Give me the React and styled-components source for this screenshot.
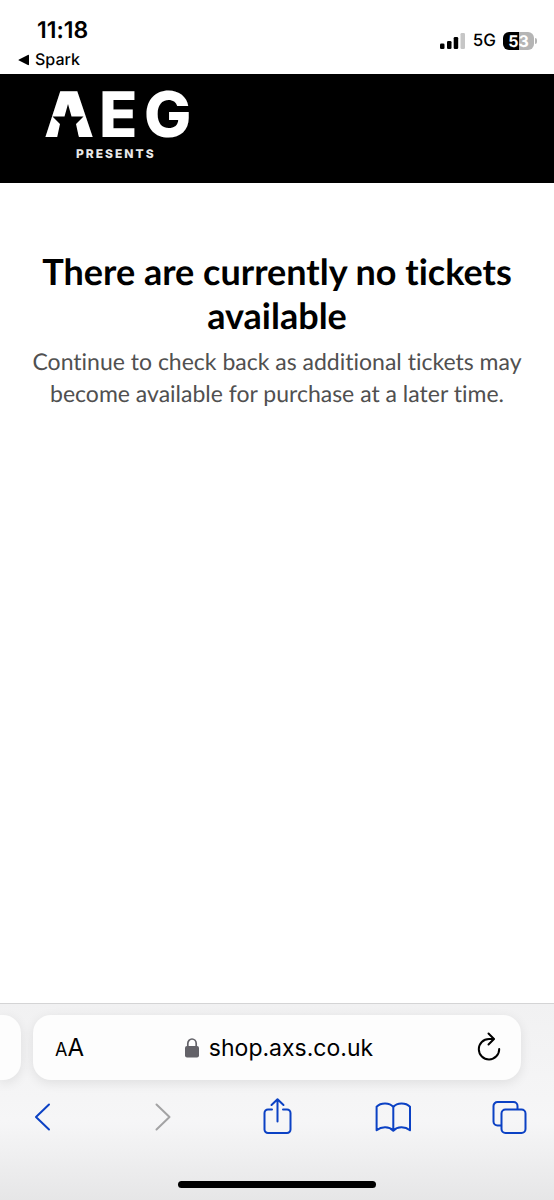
import styled, { createGlobalStyle } from 'styled-components'

const App = () => {
  return (
    <Page>
      <GlobalStyle />
      <StatusBar>
        <StatusLeft>
          <Clock>11:18</Clock>
          <BackToApp href="#spark">
            <svg width="12" height="12" viewBox="0 0 12 12" aria-hidden="true">
              <path d="M11 1.6v8.8c0 .7-.6.9-1.1.6L1 6.6c-.6-.3-.6-.9 0-1.2L9.900 1c.5-.3 1.100-.1 1.100.6z" />
            </svg>
            Spark
          </BackToApp>
        </StatusLeft>
        <StatusRight>
          <SignalIcon />
          <Network>5G</Network>
          <Battery>
            <BatteryBody>53</BatteryBody>
            <BatteryTip />
          </Battery>
        </StatusRight>
      </StatusBar>

      <Header>
        <AegLogo />
      </Header>

      <Main>
        <Title>There are currently no tickets available</Title>
        <Message>
          Continue to check back as additional tickets may become available for purchase at a later
          time.
        </Message>
      </Main>

      <BrowserBar>
        <TabRow>
          <PreviousTab />
          <AddressBar>
            <TextSizeButton aria-label="Page settings">
              <small>A</small>A
            </TextSizeButton>
            <AddressButton>
              <LockIcon />
              shop.axs.co.uk
            </AddressButton>
            <ReloadButton aria-label="Reload">
              <ReloadIcon />
            </ReloadButton>
          </AddressBar>
        </TabRow>

        <Toolbar>
          <ToolButton aria-label="Back">
            <ToolIcon>
              <path d="M27 7.500 14 20l13 12.500" />
            </ToolIcon>
          </ToolButton>
          <ToolButton aria-label="Forward" disabled>
            <ToolIcon>
              <path d="M17.500 7.500 30.500 20l-13 12.500" />
            </ToolIcon>
          </ToolButton>
          <ToolButton aria-label="Share">
            <ToolIcon>
              <path d="M16 12.500h-4a3.500 3.500 0 0 0-3.500 3.500v16.500a3.500 3.500 0 0 0 3.500 3.500h19a3.500 3.500 0 0 0 3.500-3.500V16a3.500 3.500 0 0 0-3.500-3.500h-4" />
              <path d="M21.500 24.500V2.500M15.500 8l6-5.700L27.500 8" />
            </ToolIcon>
          </ToolButton>
          <ToolButton aria-label="Bookmarks">
            <ToolIcon>
              <path d="M21.300 10C17.500 5.600 9 5.400 4.600 9.800V33.300c5-4 12.500-4 16.700.4 4.200-4.400 11.700-4.400 16.700-.4V9.800C33.600 5.400 25.100 5.600 21.300 10zM21.300 10v23.500" />
            </ToolIcon>
          </ToolButton>
          <ToolButton aria-label="Tabs">
            <ToolIcon>
              <rect x="12.500" y="12.500" width="24" height="23.500" rx="4" />
              <path d="M12 28.500H8.500a4 4 0 0 1-4-4V9a4 4 0 0 1 4-4h16a4 4 0 0 1 4 4v3" />
            </ToolIcon>
          </ToolButton>
        </Toolbar>
        <HomeIndicator />
      </BrowserBar>
    </Page>
  )
}

const SignalIcon = () => (
  <svg width="26" height="18" viewBox="0 0 26 18" aria-hidden="true">
    <rect x="0" y="11.500" width="4.500" height="5.500" rx="1.300" />
    <rect x="7" y="9" width="4.500" height="8" rx="1.300" />
    <rect x="13.700" y="5" width="4.500" height="12" rx="1.300" />
    <rect x="20.500" y="1" width="4.500" height="16" rx="1.300" fill="#c6c6c6" />
  </svg>
)

const AegLogo = () => (
  <svg width="160" height="92" viewBox="0 0 160 92" role="img" aria-label="AEG Presents">
    <text
      x="4 59 104"
      y="63"
      fill="#fff"
      fontFamily="Inter, sans-serif"
      fontWeight="800"
      fontSize="63"
    >
      <tspan fontWeight="900">A</tspan>EG
    </text>
    {/* fill the counter of the A, then cut the star out of it */}
    <path fill="#fff" d="M22 22H34L40 50H16z" />
    <path fill="#000" d="M28 30 31.500 42.500H43.500L36 50 39 64H17L20 50 12.500 42.500H24.500z" />
    <text
      x="36"
      y="84"
      fill="#e8e8e8"
      fontFamily="Inter, sans-serif"
      fontWeight="800"
      fontSize="12"
      letterSpacing="2"
    >
      PRESENTS
    </text>
  </svg>
)

const LockIcon = () => (
  <svg width="14" height="20" viewBox="0 0 14 20" aria-hidden="true">
    <rect x="0" y="8" width="14" height="11.500" rx="2" fill="#636268" />
    <path d="M2.800 9V5.500a4.200 4.500 0 0 1 8.400 0V9" fill="none" stroke="#636268" strokeWidth="1.700" />
  </svg>
)

const ReloadIcon = () => (
  <svg width="28" height="32" viewBox="0 0 28 32" aria-hidden="true">
    <g fill="none" stroke="#000" strokeWidth="2" strokeLinecap="round" strokeLinejoin="round">
      <path d="M19.500 7H15a10.200 10.200 0 1 0 10.200 10" />
      <path d="M14.500 1.500 20 7 14.500 12.500" />
    </g>
  </svg>
)

const GlobalStyle = createGlobalStyle`
  * {
    box-sizing: border-box;
  }
  body {
    margin: 0;
    background: #fff;
    color: #000;
    font-family: Inter, sans-serif;
    font-variant-ligatures: none;
    text-rendering: geometricPrecision;
  }
  svg {
    display: block;
    flex-shrink: 0;
  }
`

const Page = styled.div`
  display: flex;
  flex-direction: column;
  min-height: 100vh;
`

const StatusBar = styled.header`
  display: flex;
  justify-content: space-between;
  padding: 18px 17px 4px 18px;
`

const StatusLeft = styled.div`
  display: flex;
  flex-direction: column;
  gap: 7px;
`

const Clock = styled.time`
  padding-left: 19px;
  font-size: 23px;
  line-height: 24px;
  font-weight: 600;
`

const BackToApp = styled.a`
  display: flex;
  align-items: center;
  gap: 5px;
  color: #000;
  font-size: 16px;
  line-height: 21px;
  font-weight: 500;
  text-decoration: none;
`

const StatusRight = styled.div`
  display: flex;
  align-items: center;
  gap: 7px;
  height: 46px;
`

const Network = styled.span`
  font-size: 17px;
  line-height: 18px;
  font-weight: 500;
`

const Battery = styled.div`
  display: flex;
  align-items: center;
  gap: 1px;
`

const BatteryBody = styled.span`
  width: 31px;
  border-radius: 6px;
  background: linear-gradient(90deg, #000 53%, #b5b5b5 53%);
  color: #fff;
  font-size: 16px;
  line-height: 18px;
  font-weight: 700;
  text-align: center;
`

const BatteryTip = styled.span`
  width: 2px;
  height: 6px;
  border-radius: 0 2px 2px 0;
  background: #b5b5b5;
`

const Header = styled.div`
  padding: 0 40px 17px;
  background: #000;
`

const Main = styled.main`
  flex: 1;
  padding: 66px 24px 24px;
  font-family: Lato, sans-serif;
  text-align: center;
`

const Title = styled.h1`
  margin: 0;
  font-size: 36px;
  line-height: 44px;
  font-weight: 700;
`

const Message = styled.p`
  margin: 8px 0 0;
  color: #505050;
  font-size: 23px;
  line-height: 32px;
`

const BrowserBar = styled.footer`
  border-top: 1px solid #d4d4d5;
  background: linear-gradient(#f1f1f2, #f6f6f7 60%, #e6e6e7);
`

const TabRow = styled.div`
  display: flex;
  gap: 12px;
  padding: 11px 33px 0 0;
`

const PreviousTab = styled.div`
  width: 21px;
  border-radius: 0 18px 18px 0;
  background: #fdfdfd;
  box-shadow: 0 3px 12px rgba(0, 0, 0, 0.09);
`

const AddressBar = styled.div`
  flex: 1;
  display: flex;
  align-items: center;
  justify-content: space-between;
  height: 65px;
  padding: 0 19px 0 22px;
  border-radius: 18px;
  background: #fdfdfd;
  box-shadow: 0 3px 12px rgba(0, 0, 0, 0.09);
`

const PlainButton = styled.button`
  display: flex;
  align-items: center;
  padding: 0;
  border: none;
  background: none;
  color: #000;
  font-family: inherit;
  cursor: pointer;
`

const TextSizeButton = styled(PlainButton)`
  align-items: baseline;
  font-size: 24px;
  small {
    font-size: 18px;
  }
`

const AddressButton = styled(PlainButton)`
  gap: 10px;
  font-size: 23px;
`

const ReloadButton = styled(PlainButton)``

const Toolbar = styled.nav`
  display: flex;
  justify-content: space-between;
  padding: 17px 25px 0 22px;
`

const ToolButton = styled(PlainButton)`
  color: #0b41c4;
  &:disabled {
    color: #a3a3a4;
    cursor: default;
  }
`

const ToolIcon = styled.svg.attrs({ viewBox: '0 0 40 40', 'aria-hidden': true })`
  width: 40px;
  height: 40px;
  fill: none;
  stroke: currentColor;
  stroke-width: 2;
  stroke-linecap: round;
  stroke-linejoin: round;
`

const HomeIndicator = styled.div`
  width: 198px;
  height: 7px;
  margin: 44px auto 12px;
  border-radius: 4px;
  background: #000;
`

export default App
